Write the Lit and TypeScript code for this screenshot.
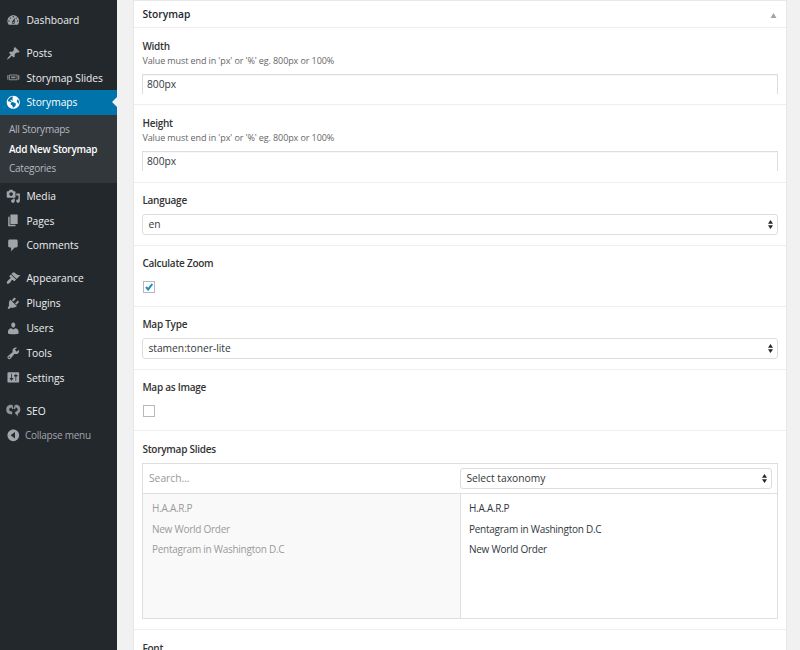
import { LitElement, html, css, svg, nothing } from "lit";
import { customElement, property } from "lit/decorators.js";
import { classMap } from "lit/directives/class-map.js";

const icons: Record<string, unknown> = {
  dashboard: svg`<path fill-rule="evenodd" d="M3.76 16h12.48c1.1-1.37 1.76-3.11 1.76-5 0-4.42-3.58-8-8-8s-8 3.58-8 8c0 1.89.66 3.63 1.76 5zM10 4c.55 0 1 .45 1 1s-.45 1-1 1-1-.45-1-1 .45-1 1-1zM6 6c.55 0 1 .45 1 1s-.45 1-1 1-1-.45-1-1 .45-1 1-1zm8 0c.55 0 1 .45 1 1s-.45 1-1 1-1-.45-1-1 .45-1 1-1zm-5.37 5.55L12 7v6c0 1.1-.9 2-2 2s-2-.9-2-2c0-.57.24-1.08.63-1.45zM4 10c.55 0 1 .45 1 1s-.45 1-1 1-1-.45-1-1 .45-1 1-1zm12 0c.55 0 1 .45 1 1s-.45 1-1 1-1-.45-1-1 .45-1 1-1zm-5 3c0-.55-.45-1-1-1s-1 .45-1 1 .45 1 1 1 1-.45 1-1z"/>`,
  post: svg`<path d="M10.44 3.02l1.82-1.82 6.36 6.35-1.83 1.82c-1.05-.68-2.48-.57-3.41.36l-.75.75c-.92.93-1.04 2.35-.35 3.41l-1.83 1.82-2.41-2.41-2.8 2.79c-.42.42-3.38 2.71-3.8 2.29s1.86-3.39 2.28-3.81l2.79-2.79L4.1 9.36l1.83-1.82c1.05.69 2.48.57 3.4-.36l.75-.75c.93-.92 1.05-2.35.36-3.41z"/>`,
  slides: svg`<path fill-rule="evenodd" opacity=".8" d="M5 6.200h10c.5 0 .8.3.8.8v6.300c0 .5-.3.8-.8.8H5c-.5 0-.8-.3-.8-.8V7c0-.5.3-.8.8-.8zM5.500 7.500v5.300h9V7.500zM7 9h6v2.300H7zM2.400 6.800h1v6.600h-1c-.4 0-.7-.3-.7-.7V7.500c0-.4.3-.7.7-.7zM16.600 6.800h1c.4 0 .7.3.7.7v5.200c0 .4-.3.7-.7.7h-1z"/>`,
  site: svg`<path transform="translate(1 1)" d="M9 0C4.030 0 0 4.030 0 9s4.030 9 9 9 9-4.030 9-9-4.030-9-9-9zm3.460 11.950c0 1.470-.8 3.300-4.060 4.700.3-4.170-2.520-3.690-3.200-5 .126-1.100.804-2.063 1.800-2.550-1.552-.266-3-.96-4.180-2 .05.47.28.904.64 1.210-.782-.295-1.458-.817-1.940-1.500.977-3.225 3.883-5.482 7.250-5.630-.84 1.380-1.500 4.130 0 5.570C7.230 7 6.260 5 5.410 5.790c-1.130 1.060.33 2.510 3.420 3.080 3.290.59 3.660 1.580 3.630 3.080zm1.340-4c-.32-1.110.62-2.230 1.690-3.140 1.356 1.955 1.670 4.450.84 6.680-.77-1.890-2.170-2.320-2.530-3.570z"/>`,
  media: svg`<path fill-rule="evenodd" d="M13 11V4c0-.55-.45-1-1-1h-1.670L9 1H5L3.670 3H2c-.55 0-1 .45-1 1v7c0 .55.45 1 1 1h10c.55 0 1-.45 1-1zM7 4.500c1.380 0 2.500 1.120 2.500 2.500S8.380 9.500 7 9.500 4.500 8.380 4.500 7 5.620 4.500 7 4.500zM14 6h5v10.500c0 1.380-1.120 2.500-2.500 2.500S14 17.880 14 16.500s1.120-2.500 2.500-2.500c.17 0 .34.02.5.05V9h-3V6zm-4 8.050V13h2v3.500c0 1.380-1.120 2.500-2.500 2.500S7 17.880 7 16.500 8.120 14 9.500 14c.17 0 .34.02.5.05z"/>`,
  page: svg`<path d="M6 15V2h10v13H6zm-1 1h8v2H3V5h2v11z"/>`,
  comments: svg`<path d="M5 2h9c1.100 0 2 .9 2 2v7c0 1.100-.9 2-2 2h-2l-5 5v-5H5c-1.100 0-2-.9-2-2V4c0-1.100.9-2 2-2z"/>`,
  appearance: svg`<path d="M14.480 11.060L7.410 3.990l1.500-1.500c.5-.56 2.300-.47 3.510.32 1.210.8 1.430 1.280 2.910 2.100 1.180.64 2.450 1.260 4.450.85zm-.71.71L6.700 4.700 4.930 6.470c-.39.39-.39 1.020 0 1.410l1.060 1.060c.39.39.39 1.030 0 1.420-.6.6-1.430 1.110-2.210 1.690-.35.26-.7.53-1.010.84C1.430 14.230.4 16.080 1.400 17.070c.99 1 2.840-.03 4.180-1.360.31-.31.58-.66.85-1.020.57-.78 1.080-1.610 1.690-2.210.39-.39 1.020-.39 1.410 0l1.060 1.060c.39.39 1.020.39 1.410 0z"/>`,
  plugins: svg`<path d="M13.110 4.360L9.870 7.600 8 5.730l3.240-3.240c.35-.34 1.050-.2 1.560.32.52.51.66 1.210.31 1.550zm-8 1.770l.91-1.120 9.010 9.010-1.190.84c-.71.71-2.630 1.160-3.820 1.160H6.140L4.900 17.260c-.59.59-1.540.59-2.120 0-.59-.58-.59-1.530 0-2.120l1.240-1.240v-3.880c0-1.130.4-3.190 1.090-3.890zm7.260 3.970l3.240-3.240c.34-.35 1.040-.21 1.550.31.52.51.66 1.210.31 1.550l-3.240 3.250z"/>`,
  users: svg`<path d="M10 9.250c-2.270 0-2.730-3.440-2.730-3.440C7 4.020 7.820 2 9.970 2c2.160 0 2.980 2.020 2.710 3.810 0 0-.41 3.440-2.680 3.440zm0 2.570L12.720 10c2.390 0 4.520 2.330 4.520 4.530v2.490s-3.650 1.130-7.240 1.130c-3.650 0-7.240-1.130-7.240-1.130v-2.490c0-2.250 1.940-4.480 4.470-4.480z"/>`,
  tools: svg`<path fill-rule="evenodd" d="M16.680 9.770c-1.340 1.340-3.300 1.670-4.950.99l-5.410 6.520c-.99.99-2.590.99-3.580 0s-.99-2.590 0-3.570l6.520-5.420c-.68-1.650-.35-3.610.99-4.950 1.280-1.280 3.120-1.620 4.720-1.060l-2.890 2.890 2.820 2.820 2.860-2.870c.53 1.580.18 3.390-1.080 4.650zM3.810 16.210c.4.39 1.040.39 1.430 0 .4-.4.4-1.040 0-1.430-.39-.4-1.030-.4-1.430 0-.39.39-.39 1.030 0 1.430z"/>`,
  settings: svg`<path fill-rule="evenodd" d="M18 16V4c0-.55-.45-1-1-1H3c-.55 0-1 .45-1 1v12c0 .55.45 1 1 1h14c.55 0 1-.45 1-1zM8 11h1c.55 0 1 .45 1 1s-.45 1-1 1H8v1.500c0 .28-.22.5-.5.5s-.5-.22-.5-.5V13H6c-.55 0-1-.45-1-1s.45-1 1-1h1V5.500c0-.28.22-.5.5-.5s.5.22.5.5V11zm5-2h-1c-.55 0-1-.45-1-1s.45-1 1-1h1V5.500c0-.28.22-.5.5-.5s.5.22.5.5V7h1c.55 0 1 .45 1 1s-.45 1-1 1h-1v5.500c0 .28-.22.5-.5.5s-.5-.22-.5-.5V9z"/>`,
  seo: svg`<g fill="none" stroke="currentColor" opacity=".88"><path stroke-width="4" d="M7.800 4C4.500 4.200 2.300 6.200 2.300 8.900c0 2.800 2.200 4.700 6.200 4.900"/><path stroke-width="3.600" d="M13 4c3 .4 4.900 2.200 4.900 4.900 0 2.500-1.600 4.300-4.700 5"/><path stroke-width="2" d="M8 3l1.300 5.200M13 3l-1.500 5.200"/></g><path opacity=".88" d="M11.600 13.300l4.800-.6-.4 6-1.600-2.900z"/>`,
  collapse: svg`<path fill-rule="evenodd" d="M10 2c4.420 0 8 3.580 8 8s-3.580 8-8 8-8-3.580-8-8 3.580-8 8-8zM12.300 5.600L6.300 10l6 4.400z"/>`,
};

@customElement("wp-icon")
class WpIcon extends LitElement {
  @property() name = "";
  static styles = css`
    :host { display: block; width: 14.600px; height: 14.600px; flex: none; }
    .glyph { display: block; width: 100%; height: 100%; fill: currentColor; }
  `;
  render() {
    return html`<svg class="glyph" viewBox="0 0 20 20">${icons[this.name]}</svg>`;
  }
}

interface Item { label: string; icon: string; gap?: boolean; sub?: string[] }

const menu: Item[] = [
  { label: "Dashboard", icon: "dashboard" },
  { label: "Posts", icon: "post", gap: true },
  { label: "Storymap Slides", icon: "slides" },
  { label: "Storymaps", icon: "site", sub: ["All Storymaps", "Add New Storymap", "Categories"] },
  { label: "Media", icon: "media" },
  { label: "Pages", icon: "page" },
  { label: "Comments", icon: "comments" },
  { label: "Appearance", icon: "appearance", gap: true },
  { label: "Plugins", icon: "plugins" },
  { label: "Users", icon: "users" },
  { label: "Tools", icon: "tools" },
  { label: "Settings", icon: "settings" },
  { label: "SEO", icon: "seo", gap: true },
];

@customElement("wp-menu")
class WpMenu extends LitElement {
  static styles = css`
    :host { display: block; width: 117px; flex: none; background: #23282d; padding-top: 7.500px; box-sizing: border-box; }
    .item { display: flex; align-items: center; gap: 5.800px; height: 24.800px; padding-left: 6px; color: #a0a5aa; position: relative; font-size: 10.260px; white-space: nowrap; }
    .text { color: #eee; }
    .gap { margin-top: 8.200px; }
    .active { background: #0073aa; color: #fff; }
    .active .text { color: #fff; }
    .active::after { content: ""; position: absolute; right: 0; top: 6.500px; border: 5.800px solid transparent; border-left: 0; border-right-color: #f1f1f1; }
    .sub { background: #32373c; height: 68.600px; box-sizing: border-box; padding: 5.400px 0 0 9px; font-size: 10px; letter-spacing: -0.250px; color: #b4b9be; }
    .link { height: 19.300px; line-height: 19.300px; white-space: nowrap; }
    .current { color: #fff; font-weight: 600; letter-spacing: -0.290px; }
    .collapse { gap: 4.400px; }
    .collapse .text { color: #a0a5aa; font-size: 10px; letter-spacing: -0.260px; }
  `;
  render() {
    return html`${menu.map((m) => html`
      <div class=${classMap({ item: true, gap: !!m.gap, active: !!m.sub })}>
        <wp-icon name=${m.icon}></wp-icon><span class="text">${m.label}</span>
      </div>
      ${m.sub ? html`<div class="sub">${m.sub.map((s, i) => html`
        <div class=${classMap({ link: true, current: i === 1 })}>${s}</div>`)}</div>` : nothing}`)}
      <div class="item collapse"><wp-icon name="collapse"></wp-icon><span class="text">Collapse menu</span></div>`;
  }
}

@customElement("wp-select")
class WpSelect extends LitElement {
  @property() value = "";
  static styles = css`
    :host { display: flex; align-items: center; justify-content: space-between; box-sizing: border-box; height: 21px; border: 1px solid #ddd; border-radius: 3px; background: #fff; padding: 0 4px 0 5.400px; font-size: 10.260px; color: #32373c; }
    .value { padding-bottom: 1px; }
    .arrows { width: 5px; height: 9px; fill: #23282d; }
  `;
  render() {
    return html`<span class="value">${this.value}</span>
      <svg class="arrows" viewBox="0 0 5 9"><path d="M2.500 0L5 3.800H0zM0 5.200h5L2.500 9z"/></svg>`;
  }
}

@customElement("app-root")
class AppRoot extends LitElement {
  static styles = css`
    :host { display: flex; width: 800px; height: 650px; overflow: hidden; background: #f1f1f1; font-family: "Open Sans", "Noto Sans", sans-serif; }
    .box { box-sizing: border-box; width: 654px; height: 700px; margin: 0 0 0 16px; border: 1px solid #e8e8e8; background: #fff; flex: none; }
    .head { display: flex; justify-content: space-between; align-items: center; height: 26px; padding: 0 9px 0 8.400px; border-bottom: 1px solid #eee; font-size: 10.260px; font-weight: 600; color: #23282d; }
    .toggle { width: 7px; height: 5px; fill: #a0a5aa; margin-top: 2px; }
    .field { box-sizing: border-box; border-bottom: 1px solid #eee; padding: 11px 8px 0; }
    .h77 { height: 77px; }
    .h78 { height: 78px; }
    .h63 { height: 63px; padding-top: 10px; }
    .h61 { height: 61px; padding-top: 10px; }
    .h199 { height: 199px; }
    .label { height: 15px; line-height: 15px; font-size: 10px; letter-spacing: -0.260px; font-weight: 600; color: #333; padding-left: 0.400px; }
    .note { height: 15px; line-height: 13px; font-size: 9px; letter-spacing: -0.100px; color: #666; padding-left: 0.400px; }
    .input { box-sizing: border-box; height: 20px; line-height: 19px; margin-top: 5px; border: 1px solid #ddd; border-bottom: 0; padding-left: 4px; font-size: 10.260px; color: #32373c; box-shadow: inset 0 1px 1px #00000009; }
    .field wp-select { margin-top: 6px; }
    .check { box-sizing: border-box; display: block; width: 12px; height: 12px; border: 1px solid #b4b9be; margin: 10px 0 0 1px; }
    .tick { display: block; width: 10px; height: 10px; fill: none; stroke: #1e8cbe; stroke-width: 2; }
    .relation { box-sizing: border-box; height: 156px; margin-top: 6px; border: 1px solid #dfdfdf; display: grid; grid-template: 30px 1fr / 317px 1fr; }
    .search { font-size: 10.260px; color: #999; padding-left: 6px; line-height: 29px; border-bottom: 1px solid #dfdfdf; }
    .tax { border-bottom: 1px solid #dfdfdf; padding-right: 5px; }
    .tax wp-select { margin-top: 4px; }
    .list { padding: 4px 9px 0; font-size: 10px; letter-spacing: -0.260px; line-height: 20.500px; color: #32373c; }
    .choices { background: #f9f9f9; color: #999; }
    .values { border-left: 1px solid #dfdfdf; padding-left: 8px; }
  `;
  size(label: string, cls: string) {
    return html`<div class="field ${cls}"><div class="label">${label}</div>
      <div class="note">Value must end in 'px' or '%' eg. 800px or 100%</div>
      <div class="input">800px</div></div>`;
  }
  select(label: string, value: string, cls: string) {
    return html`<div class="field ${cls}"><div class="label">${label}</div><wp-select value=${value}></wp-select></div>`;
  }
  check(label: string, on: boolean, cls: string) {
    return html`<div class="field ${cls}"><div class="label">${label}</div>
      <span class="check">${on ? html`<svg class="tick" viewBox="0 0 10 10"><path d="M2 5l2.200 2.400L8.300 2"/></svg>` : nothing}</span></div>`;
  }
  render() {
    return html`<wp-menu></wp-menu>
      <div class="box">
        <div class="head"><span>Storymap</span><svg class="toggle" viewBox="0 0 7 5"><path d="M3.500 0L6.500 5h-6z"/></svg></div>
        ${this.size("Width", "h77")}
        ${this.size("Height", "h78")}
        ${this.select("Language", "en", "h63")}
        ${this.check("Calculate Zoom", true, "h61")}
        ${this.select("Map Type", "stamen:toner-lite", "h63")}
        ${this.check("Map as Image", false, "h61")}
        <div class="field h199"><div class="label">Storymap Slides</div>
          <div class="relation">
            <div class="search">Search...</div>
            <div class="tax"><wp-select value="Select taxonomy"></wp-select></div>
            <div class="list choices">${["H.A.A.R.P", "New World Order", "Pentagram in Washington D.C"].map((t) => html`<div>${t}</div>`)}</div>
            <div class="list values">${["H.A.A.R.P", "Pentagram in Washington D.C", "New World Order"].map((t) => html`<div>${t}</div>`)}</div>
          </div>
        </div>
        <div class="field"><div class="label">Font</div></div>
      </div>`;
  }
}
